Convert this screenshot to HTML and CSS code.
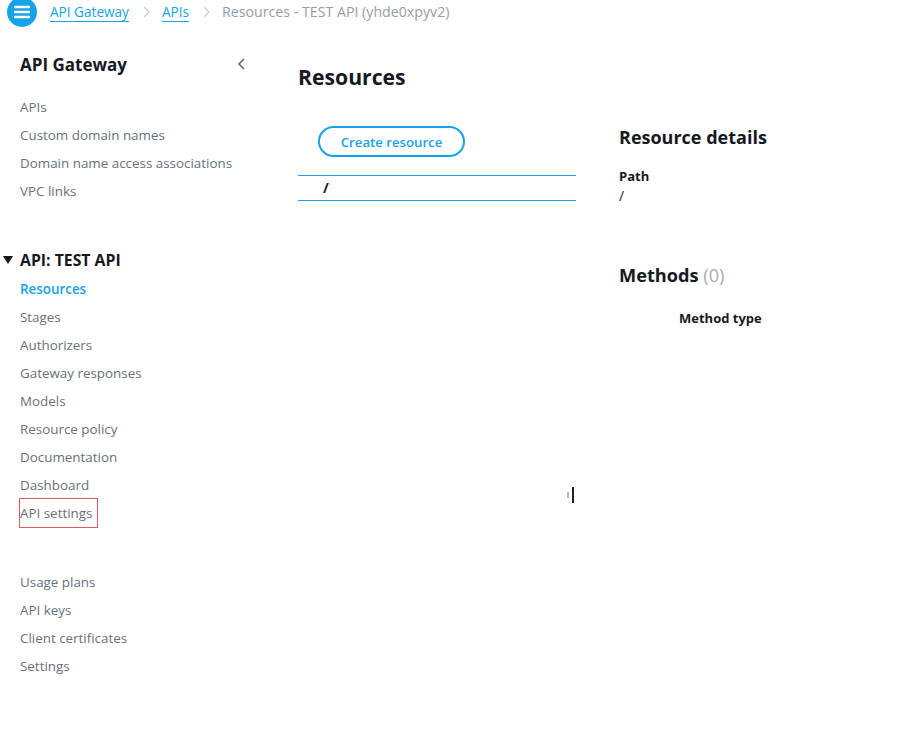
FILE: index.html
```html
<!DOCTYPE html>
<html lang="en">
<head>
<meta charset="utf-8">
<title>Resources - TEST API</title>
<link rel="stylesheet" href="styles.css">
</head>
<body>
<header class="topbar">
  <span class="menu-btn">
    <svg width="30" height="30" viewBox="0 0 30 30"><circle cx="15" cy="15" r="15" fill="#15a3e8"/><path d="M8 10h14M8 15h14M8 20h14" stroke="#fff" stroke-width="2.4" stroke-linecap="round"/></svg>
  </span>
  <nav class="crumbs">
    <a class="crumb-link">API Gateway</a>
    <svg class="crumb-sep" width="8" height="12" viewBox="0 0 8 12"><path d="M2 1l5 5-5 5" fill="none" stroke="#c6ccd3" stroke-width="1.2"/></svg>
    <a class="crumb-link">APIs</a>
    <svg class="crumb-sep" width="8" height="12" viewBox="0 0 8 12"><path d="M2 1l5 5-5 5" fill="none" stroke="#c6ccd3" stroke-width="1.2"/></svg>
    <span class="crumb-current">Resources - TEST API (yhde0xpyv2)</span>
  </nav>
</header>
<div class="layout">
  <aside class="sidebar">
    <div class="side-head">
      <span class="side-title">API Gateway</span>
      <svg class="collapse" width="10" height="14" viewBox="0 0 10 14"><path d="M7 2L2 7l5 5" fill="none" stroke="#5f6b7a" stroke-width="1.6"/></svg>
    </div>
    <ul class="nav nav-first">
      <li>APIs</li>
      <li>Custom domain names</li>
      <li>Domain name access associations</li>
      <li>VPC links</li>
    </ul>
    <div class="section-head">
      <svg class="caret" width="10" height="10" viewBox="0 0 10 10"><path d="M0 1h10L5 9z" fill="#16191f"/></svg>
      <span>API: TEST API</span>
    </div>
    <ul class="nav">
      <li class="active">Resources</li>
      <li>Stages</li>
      <li>Authorizers</li>
      <li>Gateway responses</li>
      <li>Models</li>
      <li>Resource policy</li>
      <li>Documentation</li>
      <li>Dashboard</li>
      <li><span class="highlight">API settings</span></li>
    </ul>
    <ul class="nav nav-last">
      <li>Usage plans</li>
      <li>API keys</li>
      <li>Client certificates</li>
      <li>Settings</li>
    </ul>
  </aside>
  <main class="main">
    <h1 class="page-title">Resources</h1>
    <div class="split">
      <section class="tree-pane">
        <button class="btn-outline">Create resource</button>
        <div class="tree">
          <div class="tree-row">/</div>
        </div>
      </section>
      <section class="details">
        <h2 class="details-title">Resource details</h2>
        <div class="field-label">Path</div>
        <div class="field-value">/</div>
        <h2 class="methods-title">Methods <span class="count">(0)</span></h2>
        <div class="col-head">Method type</div>
      </section>
    </div>
  </main>
</div>
<div class="cursor"><span class="cursor-a"></span><span class="cursor-b"></span></div>
</body>
</html>
```
FILE: styles.css
```css
* { box-sizing: border-box; }
html, body { margin: 0; padding: 0; background: #fff; }
body {
  font-family: "Open Sans", "Noto Sans", sans-serif;
  font-size: 14px;
  color: #16191f;
  width: 924px;
  height: 756px;
  overflow: hidden;
  position: relative;
}
.topbar {
  height: 26px;
  display: flex;
  align-items: flex-start;
}
.menu-btn {
  display: block;
  margin: -3px 0 0 7px;
  width: 30px;
  height: 30px;
}
.menu-btn svg { display: block; }
.crumbs {
  display: flex;
  align-items: center;
  height: 24px;
  margin-left: 13px;
  font-size: 13.6px;
}
.crumb-link {
  color: #15a3e8;
  text-decoration: underline;
  text-underline-offset: 4px;
  text-decoration-thickness: 1px;
  line-height: 24px;
}
.crumb-sep { margin: 0 12px 0 13px; }
.crumb-current { color: #959ea8; line-height: 24px; font-size: 14.2px; }
.layout { display: flex; }
.sidebar {
  width: 270px;
  flex: none;
  padding: 24px 0 0 20px;
}
.side-head {
  display: flex;
  align-items: center;
  justify-content: space-between;
  height: 28px;
  padding-right: 23px;
}
.side-title { font-size: 17px; font-weight: 700; }
.collapse { display: block; }
.nav { list-style: none; margin: 0; padding: 0; }
.nav li {
  line-height: 28px;
  height: 28px;
  color: #66717e;
  font-size: 13.4px;
}
.nav-first { margin-top: 15px; }
.section-head {
  margin-top: 41px;
  margin-left: -17px;
  height: 28px;
  display: flex;
  align-items: center;
  gap: 7px;
  font-size: 15.8px;
  font-weight: 700;
  margin-bottom: 1px;
}
.caret { display: block; }
.nav li.active { color: #15a3e8; font-weight: 600; }
.highlight {
  display: inline-block;
  line-height: 28px;
  outline: 1px solid #e0575e;
  padding-right: 5px;
}
.nav-last { margin-top: 41px; }
.main { flex: 1; padding-left: 28px; }
.page-title {
  margin: 36px 0 0;
  font-size: 21.2px;
  line-height: 30px;
  font-weight: 700;
}
.split { display: flex; margin-top: 32px; }
.tree-pane { width: 278px; flex: none; }
.btn-outline {
  display: block;
  margin: 2px 0 0 20px;
  height: 31px;
  width: 147px;
  border: 2px solid #15a3e8;
  border-radius: 16px;
  background: #fff;
  color: #15a3e8;
  font-family: inherit;
  font-size: 13.2px;
  font-weight: 600;
  padding: 0;
}
.tree {
  margin-top: 18px;
  border-top: 1px solid #15a3e8;
  border-bottom: 1px solid #15a3e8;
}
.tree-row {
  height: 24px;
  line-height: 24px;
  padding-left: 25px;
  font-weight: 700;
  font-size: 14px;
}
.details { margin-left: 43px; }
.details-title {
  margin: 0;
  font-size: 18px;
  line-height: 26px;
  font-weight: 700;
}
.field-label {
  margin-top: 17px;
  font-size: 13px;
  font-weight: 700;
  line-height: 18px;
}
.field-value { font-size: 14px; line-height: 18px; margin-top: 2px; }
.methods-title {
  margin: 56px 0 0;
  font-size: 18.2px;
  line-height: 28px;
  font-weight: 700;
}
.count { color: #a7aeb6; font-weight: 400; }
.col-head {
  margin: 20px 0 0 60px;
  font-size: 13px;
  line-height: 18px;
  font-weight: 700;
}
.cursor { position: absolute; left: 567px; top: 487px; width: 8px; height: 16px; }
.cursor-a { position: absolute; left: 0; top: 5px; width: 2px; height: 6px; background: #b5b5b5; }
.cursor-b { position: absolute; left: 5px; top: 0; width: 2px; height: 16px; background: #222; }
```
